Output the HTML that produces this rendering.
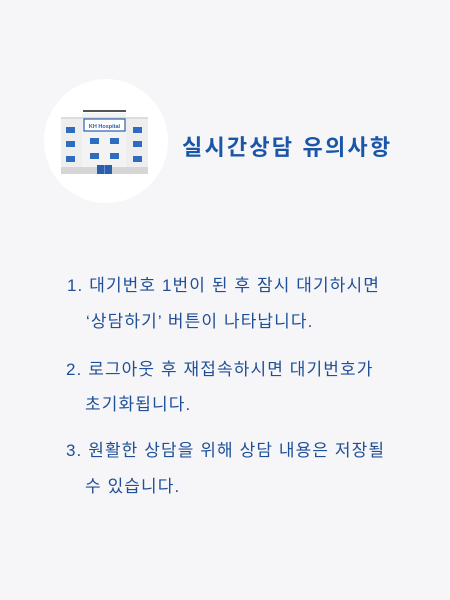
<!DOCTYPE html><html><head><meta charset="utf-8"><style>
body{margin:0;width:450px;height:600px;background:#f6f6f9;position:relative;overflow:hidden;font-family:"Liberation Sans","Noto Sans CJK KR",sans-serif}
.c{position:absolute;left:44px;top:79px;width:124px;height:124px;border-radius:50%;background:#fff}
.t{position:absolute;left:182px;top:130px;font-size:22px;font-weight:bold;color:#1a56a8;letter-spacing:2.2px}
.l{position:absolute;color:#1f4f96;font-size:17px;white-space:nowrap;letter-spacing:1.1px}
</style></head><body>
<div class="c"></div>
<svg style="position:absolute;left:0;top:0" width="450" height="600">
<rect x="83" y="110" width="43" height="2" fill="#555"/>
<rect x="61" y="118" width="87" height="56" fill="#eeeeef"/>
<rect x="82" y="113" width="44" height="57" fill="#f3f3f4"/>
<rect x="61" y="117" width="87" height="2" fill="#dcdcdc"/>
<rect x="61" y="167" width="87" height="7" fill="#d6d6d8"/>
<rect x="84" y="119" width="41" height="12" fill="#fff" stroke="#2a5fae" stroke-width="1.2"/>
<text x="104.5" y="128" font-size="5.5" font-weight="bold" fill="#2a5fae" text-anchor="middle" font-family="Liberation Sans">KH Hospital</text>
<g fill="#2f6cc0">
<rect x="66" y="127" width="9" height="6"/><rect x="66" y="141" width="9" height="6"/><rect x="66" y="156" width="9" height="6"/>
<rect x="133" y="127" width="9" height="6"/><rect x="133" y="141" width="9" height="6"/><rect x="133" y="156" width="9" height="6"/>
<rect x="90" y="138" width="9" height="6"/><rect x="110" y="138" width="9" height="6"/>
<rect x="90" y="153" width="9" height="6"/><rect x="110" y="153" width="9" height="6"/>
<rect x="97" y="165" width="15" height="9" fill="#2a5fae"/>
</g>
<rect x="104" y="165" width="1" height="9" fill="#6a93d0"/>
</svg>
<div class="t">실시간상담 유의사항</div>
<div class="l" style="left:67px;top:271px">1. 대기번호 1번이 된 후 잠시 대기하시면</div>
<div class="l" style="left:86px;top:307px">‘상담하기’ 버튼이 나타납니다.</div>
<div class="l" style="left:66px;top:355px">2. 로그아웃 후 재접속하시면 대기번호가</div>
<div class="l" style="left:85px;top:390px">초기화됩니다.</div>
<div class="l" style="left:66px;top:436px">3. 원활한 상담을 위해 상담 내용은 저장될</div>
<div class="l" style="left:85px;top:472px">수 있습니다.</div>
</body></html>
